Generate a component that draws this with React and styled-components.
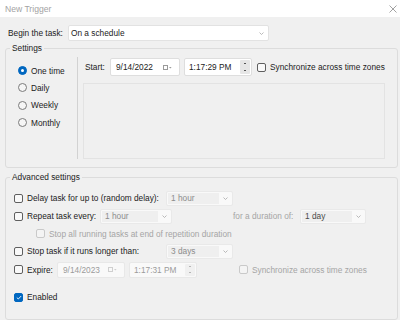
import React from 'react';
import styled, { createGlobalStyle } from 'styled-components';

const GlobalStyle = createGlobalStyle`
  body {
    margin: 0;
    background: #f0f0f0;
    font-family: "Liberation Sans", Arial, sans-serif;
    font-size: 8.3px;
    color: #1b1b1b;
  }
  * { box-sizing: border-box; }
`;

const Window = styled.div`
  width: 400px;
  height: 320px;
  overflow: hidden;
  background: #f0f0f0;
  display: flex;
  flex-direction: column;
`;

const TitleBar = styled.div`
  height: 17px;
  flex: none;
  background: #fff;
  display: flex;
  align-items: center;
  justify-content: space-between;
  padding: 0 3px 0 5px;
  color: #a3a3a3;
  font-size: 8.6px;
`;

const BeginRow = styled.div`
  display: flex;
  align-items: center;
  height: 16px;
  margin-top: 8px;
  padding-left: 8px;
`;

const FieldLabel = styled.span`
  width: ${(p) => p.$w}px;
  flex: none;
  white-space: nowrap;
  color: ${(p) => (p.$disabled ? '#a5a5a5' : 'inherit')};
`;

const Select = styled.div`
  width: ${(p) => p.$w}px;
  height: ${(p) => p.$h || 15}px;
  margin-left: ${(p) => p.$ml || 0}px;
  flex: none;
  display: flex;
  align-items: stretch;
  background: ${(p) => (p.$disabled ? '#f9f9f9' : '#fff')};
  border: 1px solid ${(p) => (p.$disabled ? '#e9e9e9' : '#e2e2e2')};
  border-radius: 2px;
  color: ${(p) => (p.$disabled ? p.$tone || '#8c8c8c' : 'inherit')};
`;

const SelectText = styled.span`
  flex: 1;
  display: flex;
  align-items: center;
  padding-left: ${(p) => (p.$disabled ? 3 : 2)}px;
  background: ${(p) => (p.$disabled ? '#efefef' : 'transparent')};
  margin: ${(p) => (p.$disabled ? '1px 0 1px 1px' : '0')};
  white-space: nowrap;
`;

const Chevron = styled.span`
  width: 13px;
  flex: none;
  display: flex;
  align-items: center;
  justify-content: center;
`;

const Group = styled.fieldset`
  margin: ${(p) => p.$top}px 2px 0 5px;
  border: 1px solid #dcdcdc;
  border-radius: 3px;
  padding: ${(p) => p.$pad};
  min-width: 0;
  flex: ${(p) => (p.$grow ? '1 0 auto' : 'none')};
`;

const Legend = styled.legend`
  padding: 0 2px;
  line-height: 12px;
`;

const SettingsBody = styled.div`
  display: flex;
`;

const RadioColumn = styled.div`
  width: 68px;
  flex: none;
  border-right: 1px solid #d2d2d2;
  padding: 5px 0 0 8px;
  display: grid;
  grid-auto-rows: 17.3px;
  align-content: start;
`;

const RadioRow = styled.label`
  display: flex;
  align-items: center;
  gap: 4px;
`;

const Radio = styled.span`
  width: 9px;
  height: 9px;
  border-radius: 50%;
  flex: none;
  display: flex;
  align-items: center;
  justify-content: center;
  background: ${(p) => (p.$on ? '#0067c0' : '#f6f6f6')};
  border: 1px solid ${(p) => (p.$on ? '#0067c0' : '#7b7b7b')};
  &::after {
    content: '';
    width: 3px;
    height: 3px;
    border-radius: 50%;
    background: ${(p) => (p.$on ? '#fff' : 'transparent')};
  }
`;

const DetailColumn = styled.div`
  flex: 1;
  padding-left: 5px;
  display: flex;
  flex-direction: column;
  gap: 7px;
`;

const StartRow = styled.div`
  display: flex;
  align-items: center;
  height: 18px;
  margin-top: 1px;
  padding-left: 2px;
`;

const Panel = styled.div`
  height: 76px;
  border: 1px solid #e3e3e3;
`;

const Box = styled.div`
  width: ${(p) => p.$w}px;
  height: ${(p) => p.$h}px;
  margin-left: ${(p) => p.$ml || 0}px;
  flex: none;
  display: flex;
  align-items: center;
  justify-content: space-between;
  padding: 0 ${(p) => p.$pr}px 0 ${(p) => p.$pl}px;
  background: ${(p) => (p.$disabled ? '#f9f9f9' : '#fff')};
  border: 1px solid ${(p) => (p.$disabled ? '#e8e8e8' : '#dedede')};
  border-radius: 2px;
  color: ${(p) => (p.$disabled ? '#9b9b9b' : 'inherit')};
  white-space: nowrap;
`;

const Spinner = styled.span`
  width: 10px;
  height: ${(p) => p.$h}px;
  flex: none;
  background: ${(p) => (p.$disabled ? '#f0f0f0' : '#e6e6e6')};
  border-radius: 1px;
  display: flex;
  flex-direction: column;
  align-items: center;
  justify-content: space-around;
  &::before,
  &::after {
    content: '';
    width: 2px;
    height: 1px;
    background: ${(p) => (p.$disabled ? '#b5b5b5' : '#555')};
  }
`;

const Check = styled.span`
  width: 9px;
  height: 9px;
  flex: none;
  margin-left: ${(p) => p.$ml || 0}px;
  margin-right: 4px;
  border-radius: 2px;
  display: flex;
  align-items: center;
  justify-content: center;
  background: ${(p) => (p.$on ? '#0067c0' : p.$disabled ? '#f4f4f4' : '#f9f9f9')};
  border: 1px solid ${(p) => (p.$on ? '#0067c0' : p.$disabled ? '#c9c9c9' : '#5f5f5f')};
`;

const AdvancedBody = styled.div`
  display: flex;
  flex-direction: column;
`;

const OptionRow = styled.div`
  display: flex;
  align-items: center;
  height: ${(p) => p.$h}px;
  margin-top: ${(p) => p.$mt || 0}px;
  padding-left: ${(p) => p.$pl || 4}px;
  white-space: nowrap;
`;

const Muted = styled.span`
  color: #a5a5a5;
`;

function ChevronIcon({ color = '#a8a8a8' }) {
  return (
    <svg width="5" height="3" viewBox="0 0 5 3">
      <path d="M0.5 0.5 L2.5 2.5 L4.5 0.5" fill="none" stroke={color} strokeWidth="0.8" />
    </svg>
  );
}

function CalendarIcon({ disabled }) {
  const c = disabled ? '#cfcfcf' : '#9a9a9a';
  return (
    <svg width="9" height="5" viewBox="0 0 9 5">
      <rect x="0.5" y="0.5" width="4" height="4" fill="none" stroke={c} strokeWidth="1" />
      <path d="M6 2 L8.6 2 L7.3 3.4 Z" fill={c} />
    </svg>
  );
}

function Dropdown({ w, h, ml, value, disabled, tone }) {
  return (
    <Select $w={w} $h={h} $ml={ml} $disabled={disabled} $tone={tone}>
      <SelectText $disabled={disabled}>{value}</SelectText>
      <Chevron>
        <ChevronIcon />
      </Chevron>
    </Select>
  );
}

function DateField({ w, ml, value, disabled }) {
  return (
    <Box $w={w} $h={disabled ? 16 : 18} $ml={ml} $pl={5} $pr={7} $disabled={disabled}>
      <span>{value}</span>
      <CalendarIcon disabled={disabled} />
    </Box>
  );
}

function TimeField({ w, ml, value, disabled }) {
  return (
    <Box $w={w} $h={disabled ? 16 : 18} $ml={ml} $pl={4} $pr={1} $disabled={disabled}>
      <span>{value}</span>
      <Spinner $h={disabled ? 12 : 14} $disabled={disabled} />
    </Box>
  );
}

function CheckBox({ on, disabled, ml }) {
  return (
    <Check $on={on} $disabled={disabled} $ml={ml}>
      {on && (
        <svg width="6" height="5" viewBox="0 0 6 5">
          <path d="M0.8 2.6 L2.3 4 L5.2 1" fill="none" stroke="#fff" strokeWidth="0.9" />
        </svg>
      )}
    </Check>
  );
}

const schedules = ['One time', 'Daily', 'Weekly', 'Monthly'];

export default function App() {
  return (
    <Window>
      <GlobalStyle />
      <TitleBar>
        <span>New Trigger</span>
        <svg width="8" height="8" viewBox="0 0 8 8">
          <path d="M0.5 0.5 L7.5 7.5 M7.5 0.5 L0.5 7.5" stroke="#8a8a8a" strokeWidth="0.8" />
        </svg>
      </TitleBar>

      <BeginRow>
        <FieldLabel $w={60}>Begin the task:</FieldLabel>
        <Dropdown w={201} h={16} value="On a schedule" />
      </BeginRow>

      <Group $top={1} $pad="3px 12px 8px 4px">
        <Legend>Settings</Legend>
        <SettingsBody>
          <RadioColumn>
            {schedules.map((s, i) => (
              <RadioRow key={s}>
                <Radio $on={i === 0} />
                {s}
              </RadioRow>
            ))}
          </RadioColumn>
          <DetailColumn>
            <StartRow>
              <FieldLabel $w={25}>Start:</FieldLabel>
              <DateField w={70} value="9/14/2022" />
              <TimeField w={68} ml={4} value="1:17:29 PM" />
              <CheckBox ml={5} />
              Synchronize across time zones
            </StartRow>
            <Panel />
          </DetailColumn>
        </SettingsBody>
      </Group>

      <Group $top={3} $pad="6px 12px 0 4px" $grow>
        <Legend>Advanced settings</Legend>
        <AdvancedBody>
          <OptionRow $h={18}>
            <CheckBox />
            <FieldLabel $w={139}>Delay task for up to (random delay):</FieldLabel>
            <Dropdown w={67} value="1 hour" disabled />
          </OptionRow>
          <OptionRow $h={18}>
            <CheckBox />
            <FieldLabel $w={73}>Repeat task every:</FieldLabel>
            <Dropdown w={72} value="1 hour" disabled />
            <FieldLabel $w={67} $disabled style={{ marginLeft: 61 }}>
              for a duration of:
            </FieldLabel>
            <Dropdown w={66} value="1 day" disabled tone="#4a4a4a" />
          </OptionRow>
          <OptionRow $h={17} $pl={26}>
            <CheckBox disabled />
            <Muted>Stop all running tasks at end of repetition duration</Muted>
          </OptionRow>
          <OptionRow $h={18}>
            <CheckBox />
            <FieldLabel $w={139}>Stop task if it runs longer than:</FieldLabel>
            <Dropdown w={67} value="3 days" disabled />
          </OptionRow>
          <OptionRow $h={19}>
            <CheckBox />
            <FieldLabel $w={30}>Expire:</FieldLabel>
            <DateField w={68} value="9/14/2023" disabled />
            <TimeField w={68} ml={4} value="1:17:31 PM" disabled />
            <CheckBox disabled ml={42} />
            <Muted>Synchronize across time zones</Muted>
          </OptionRow>
          <OptionRow $h={18} $mt={9}>
            <CheckBox on />
            Enabled
          </OptionRow>
        </AdvancedBody>
      </Group>
    </Window>
  );
}
